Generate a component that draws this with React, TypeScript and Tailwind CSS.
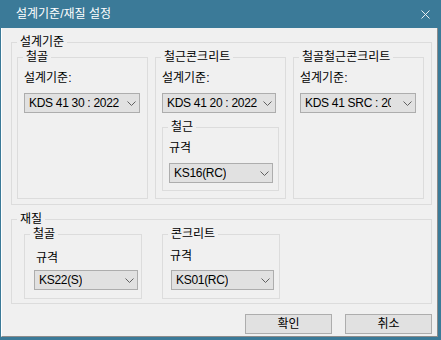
import React from 'react';

function Chevron() {
  return (
    <svg width="9" height="5" viewBox="0 0 9 5" className="shrink-0">
      <polyline points="0.5,0.5 4.5,4.5 8.5,0.5" fill="none" stroke="#606060" strokeWidth="1" />
    </svg>
  );
}

interface SelectProps {
  value: string;
  className: string;
  textClass?: string;
}

function Select({ value, className, textClass }: SelectProps) {
  return (
    <div className={`h-[20px] border border-[#adadad] bg-[#e1e1e1] flex items-center justify-between pl-[4px] pr-[3px] ${className}`}>
      <span className={`whitespace-nowrap overflow-hidden tracking-[-0.3px] ${textClass ?? ''}`}>{value}</span>
      <Chevron />
    </div>
  );
}

interface GroupProps {
  title: string;
  className: string;
  children?: React.ReactNode;
}

function Group({ title, className, children }: GroupProps) {
  return (
    <fieldset className={`border border-[#dcdcdc] pl-[5px] min-w-0 ${className}`}>
      <legend className="px-[3px] leading-[14px]">{title}</legend>
      {children}
    </fieldset>
  );
}

export default function App() {
  return (
    <div className="w-[441px] h-[340px] bg-[#3b7a98] flex flex-col font-['Liberation_Sans','Noto_Sans_CJK_KR',sans-serif] text-[12px] leading-[14px] text-black">
      <div className="h-[28px] shrink-0 flex items-center pl-[16px] text-white">
        <span>설계기준/재질 설정</span>
        <svg width="9" height="9" viewBox="0 0 9 9" className="ml-auto mr-[11px]">
          <path d="M0.5 0.5 L8.5 8.5 M8.5 0.5 L0.5 8.5" stroke="#e8eef2" strokeWidth="1" />
        </svg>
      </div>

      <div className="ml-[1px] w-[437px] h-[309px] bg-[#f0f0f0] border-l border-l-white border-r border-r-[#8c8c8c] border-b border-b-[#8c8c8c] pl-[9px] pt-[7px]">
        <Group title="설계기준" className="w-[421px] h-[170px]">
          <div className="flex mt-[1px] gap-[7px]">
            <Group title="철골" className="w-[131px] h-[149px]">
              <div className="ml-[1px] mt-[7px]">설계기준:</div>
              <Select value="KDS 41 30 : 2022" className="ml-[1px] mt-[8px] w-[116px]" />
            </Group>
            <Group title="철근콘크리트" className="w-[131px] h-[149px]">
              <div className="ml-[1px] mt-[7px]">설계기준:</div>
              <Select value="KDS 41 20 : 2022" className="ml-[1px] mt-[8px] w-[114px]" />
              <Group title="철근" className="ml-[1px] mt-[7px] w-[117px] h-[71px]">
                <div className="ml-[1px] mt-[7px]">규격</div>
                <Select value="KS16(RC)" className="ml-[1px] mt-[8px] w-[104px]" />
              </Group>
            </Group>
            <Group title="철골철근콘크리트" className="w-[131px] h-[149px]">
              <div className="ml-[1px] mt-[7px]">설계기준:</div>
              <Select value="KDS 41 SRC : 2022" className="ml-[1px] mt-[8px] w-[116px]" textClass="w-[86px]" />
            </Group>
          </div>
        </Group>

        <Group title="재질" className="mt-[7px] w-[421px] h-[92px]">
          <div className="flex mt-[1px] ml-[7px] gap-[20px]">
            <Group title="철골" className="w-[118px] h-[72px]">
              <div className="ml-[6px] mt-[10px]">규격</div>
              <Select value="KS22(S)" className="ml-[4px] mt-[5px] w-[104px]" />
            </Group>
            <Group title="콘크리트" className="w-[118px] h-[72px]">
              <div className="ml-[2px] mt-[8px]">규격</div>
              <Select value="KS01(RC)" className="ml-[3px] mt-[7px] w-[103px]" />
            </Group>
          </div>
        </Group>

        <div className="w-[421px] mt-[10px] flex justify-end gap-[13px]">
          <button className="w-[87px] h-[20px] border border-[#adadad] bg-[#e1e1e1] flex items-center justify-center">확인</button>
          <button className="w-[87px] h-[20px] border border-[#adadad] bg-[#e1e1e1] flex items-center justify-center">취소</button>
        </div>
      </div>
    </div>
  );
}
